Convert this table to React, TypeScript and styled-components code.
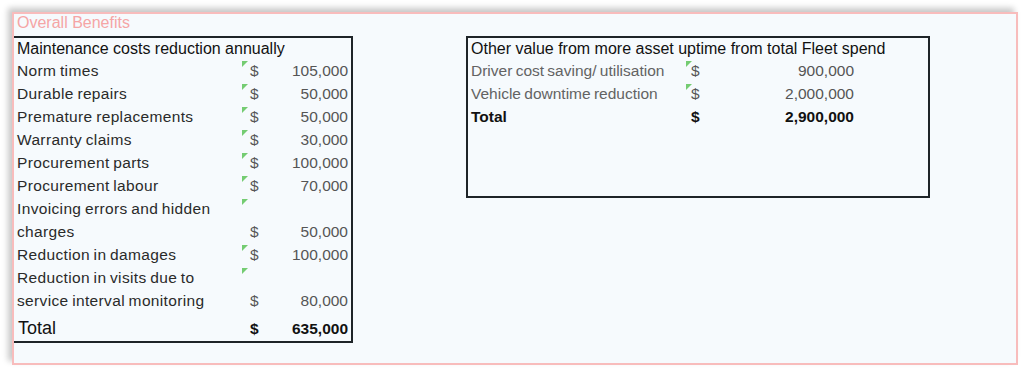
import React from 'react';
import styled, { createGlobalStyle } from 'styled-components';

const GlobalStyle = createGlobalStyle`
    html, body {
        margin: 0;
        padding: 0;
        background: #ffffff;
    }
    body {
        font-family: 'Liberation Sans', Arial, sans-serif;
    }
`;

const Page = styled.div`
    padding: 12px 0 0 12px;
    width: 1024px;
    height: 370px;
    box-sizing: border-box;
`;

const Panel = styled.div`
    width: 1006px;
    height: 353px;
    box-sizing: border-box;
    background: #f6fafd;
    border: 2px solid #f8bcbc;
    box-shadow: -4px -4px 6px rgba(0, 0, 0, 0.22);
    display: flex;
    flex-direction: column;
`;

const Title = styled.div`
    height: 22px;
    padding-left: 3px;
    font-size: 16px;
    line-height: 18px;
    color: #f5a5a5;
`;

const Tables = styled.div`
    display: flex;
    align-items: flex-start;
    gap: 113px;
`;

const Sheet = styled.div<{ $width: number; $height: number; $open?: boolean }>`
    width: ${(p) => p.$width}px;
    height: ${(p) => p.$height}px;
    box-sizing: border-box;
    border: 2px solid #1e2428;
    border-left-width: ${(p) => (p.$open ? 0 : 2)}px;
    display: flex;
    flex-direction: column;
`;

const Header = styled.div`
    height: 21px;
    padding-left: 3px;
    font-size: 16px;
    line-height: 21px;
    color: #111;
    white-space: nowrap;
`;

const Row = styled.div<{ $cols: string; $height?: number; $muted?: boolean }>`
    display: grid;
    grid-template-columns: ${(p) => p.$cols};
    height: ${(p) => p.$height ?? 23}px;
    font-size: 15.5px;
    color: ${(p) => (p.$muted ? '#636363' : '#2a2a2a')};
`;

const Label = styled.div<{ $big?: boolean; $bold?: boolean; $tight?: boolean }>`
    padding-left: ${(p) => (p.$big ? 4 : 3)}px;
    font-size: ${(p) => (p.$big ? 18 : 15.5)}px;
    font-weight: ${(p) => (p.$bold ? 700 : 400)};
    color: ${(p) => (p.$big || p.$bold ? '#111' : 'inherit')};
    line-height: 23px;
    display: flex;
    align-items: flex-end;
    letter-spacing: ${(p) => (p.$big || p.$bold || p.$tight ? 0 : 0.35)}px;
    word-spacing: -1px;
`;

const Dollar = styled.div<{ $bold?: boolean; $pad: number }>`
    position: relative;
    padding-left: ${(p) => p.$pad}px;
    line-height: 23px;
    display: flex;
    align-items: flex-end;
    font-weight: ${(p) => (p.$bold ? 700 : 400)};
    color: ${(p) => (p.$bold ? '#111' : '#555')};
`;

const Marker = styled.span`
    position: absolute;
    left: 1px;
    top: 2px;
    width: 0;
    height: 0;
    border-top: 6px solid #74cc72;
    border-right: 6px solid transparent;
`;

const Amount = styled.div<{ $bold?: boolean; $pad: number }>`
    padding-right: ${(p) => p.$pad}px;
    line-height: 23px;
    display: flex;
    align-items: flex-end;
    justify-content: flex-end;
    font-weight: ${(p) => (p.$bold ? 700 : 400)};
    color: ${(p) => (p.$bold ? '#111' : '#555')};
`;

type Item = { label: React.ReactNode; value: string; marker?: boolean; tall?: boolean };

const maintenance: Item[] = [
    { label: 'Norm times', value: '105,000', marker: true },
    { label: 'Durable repairs', value: '50,000', marker: true },
    { label: 'Premature replacements', value: '50,000', marker: true },
    { label: 'Warranty claims', value: '30,000', marker: true },
    { label: 'Procurement parts', value: '100,000', marker: true },
    { label: 'Procurement labour', value: '70,000', marker: true },
    { label: <>Invoicing errors and hidden<br />charges</>, value: '50,000', marker: true, tall: true },
    { label: 'Reduction in damages', value: '100,000', marker: true },
    { label: <>Reduction in visits due to<br />service interval monitoring</>, value: '80,000', marker: true, tall: true },
];

const uptime: Item[] = [
    { label: 'Driver cost saving/ utilisation', value: '900,000', marker: true },
    { label: 'Vehicle downtime reduction', value: '2,000,000', marker: true },
];

const LEFT_COLS = '227px 36px 1fr';
const RIGHT_COLS = '217px 34px 135px 1fr';

export default function App() {
    return (
        <Page>
            <GlobalStyle />
            <Panel>
                <Title>Overall Benefits</Title>
                <Tables>
                    <Sheet $width={339} $height={307} $open>
                        <Header>Maintenance costs reduction annually</Header>
                        {maintenance.map((item, i) => (
                            <Row key={i} $cols={LEFT_COLS} $height={item.tall ? 46 : 23}>
                                <Label>{item.label}</Label>
                                <Dollar $pad={9}>
                                    {item.marker && <Marker />}$
                                </Dollar>
                                <Amount $pad={3}>{item.value}</Amount>
                            </Row>
                        ))}
                        <Row $cols={LEFT_COLS} $height={28}>
                            <Label $big>Total</Label>
                            <Dollar $pad={9} $bold>$</Dollar>
                            <Amount $pad={3} $bold>635,000</Amount>
                        </Row>
                    </Sheet>
                    <Sheet $width={464} $height={162}>
                        <Header>Other value from more asset uptime from total Fleet spend</Header>
                        {uptime.map((item, i) => (
                            <Row key={i} $cols={RIGHT_COLS} $muted>
                                <Label $tight>{item.label}</Label>
                                <Dollar $pad={6}>
                                    {item.marker && <Marker />}$
                                </Dollar>
                                <Amount $pad={0}>{item.value}</Amount>
                                <div />
                            </Row>
                        ))}
                        <Row $cols={RIGHT_COLS}>
                            <Label $bold>Total</Label>
                            <Dollar $pad={6} $bold>$</Dollar>
                            <Amount $pad={0} $bold>2,900,000</Amount>
                            <div />
                        </Row>
                    </Sheet>
                </Tables>
            </Panel>
        </Page>
    );
}
